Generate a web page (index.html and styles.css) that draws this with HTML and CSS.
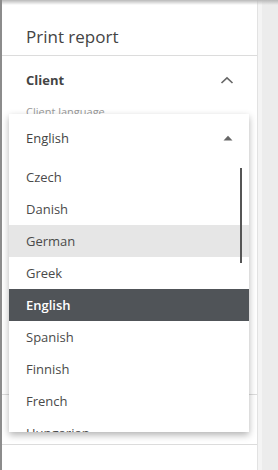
FILE: index.html
```
<!DOCTYPE html>
<html>

<head>
    <title>Print report</title>
    <link rel="stylesheet" href="styles.css">
</head>

<body>
    <div class="page">
        <div class="panel">
            <div class="panel-header">
                <h1>Print report</h1>
            </div>

            <div class="section">
                <div class="section-title">
                    <span>Client</span>
                    <svg class="chevron" width="14" height="8" viewBox="0 0 14 8">
                        <path d="M1.5 7 L7 1.8 L12.5 7" fill="none" stroke="#666" stroke-width="1.6" />
                    </svg>
                </div>
                <div class="field-label">Client language</div>
                <div class="field-spacer"></div>
            </div>

            <div class="section section-short"></div>
            <div class="section section-last"></div>

            <!-- open language dropdown -->
            <div class="dropdown">
                <div class="dropdown-head">
                    <span>English</span>
                    <svg class="caret" width="10" height="6" viewBox="0 0 10 6">
                        <path d="M0.5 5.5 L5 0.8 L9.5 5.5 Z" fill="#666" />
                    </svg>
                </div>
                <ul class="options">
                    <li>Czech</li>
                    <li>Danish</li>
                    <li class="hover">German</li>
                    <li>Greek</li>
                    <li class="selected">English</li>
                    <li>Spanish</li>
                    <li>Finnish</li>
                    <li>French</li>
                    <li>Hungarian</li>
                </ul>
                <div class="scroll-thumb"></div>
            </div>
        </div>
        <div class="side"></div>
    </div>
</body>

</html>
```

FILE: styles.css
```
/* Page frame */
body {
    margin: 0;
    font-family: "Open Sans", "Noto Sans", sans-serif;
    color: #444;
    background-color: #ececec;
}

.page {
    display: flex;
    height: 470px;
    border-left: 2px solid #8c8c8c;
    position: relative;
    overflow: hidden;
}

/* thin shadow along the top edge */
.page::before {
    content: "";
    position: absolute;
    left: 0;
    right: 0;
    top: 0;
    height: 5px;
    background: linear-gradient(#b9b9b9, rgba(200, 200, 200, 0));
    z-index: 5;
}

/* Side panel */
.panel {
    width: 255px;
    background-color: #fff;
    border-right: 1px solid #e2e2e2;
    position: relative;
}

.side {
    flex: 1;
    border-left: 4px solid #f4f4f4;
    background-color: #ececec;
}

.panel-header {
    height: 56px;
    border-bottom: 1px solid #dcdcdc;
    padding-left: 24px;
    box-sizing: border-box;
}

h1 {
    margin: 0;
    padding-top: 25px;
    font-size: 17px;
    font-weight: normal;
    line-height: 24px;
    color: #444;
}

/* Sections */
.section {
    border-bottom: 1px solid #dcdcdc;
    padding: 0 22px 0 24px;
}

.section-title {
    display: flex;
    align-items: center;
    justify-content: space-between;
    height: 48px;
    font-size: 13px;
    font-weight: bold;
}

.chevron {
    margin-right: 1px;
}

.field-label {
    font-size: 11px;
    color: #999;
    line-height: 16px;
}

.field-spacer {
    height: 274px;
}

.section-short {
    height: 49px;
}

.section-last {
    border-bottom: none;
}

/* Dropdown */
.dropdown {
    position: absolute;
    left: 7px;
    top: 114px;
    width: 240px;
    height: 318px;
    background-color: #fff;
    box-shadow: 0 3px 7px rgba(0, 0, 0, 0.3);
    overflow: hidden;
    z-index: 3;
}

.dropdown-head {
    display: flex;
    align-items: center;
    justify-content: space-between;
    height: 47px;
    padding: 0 16px 0 17px;
    font-size: 13px;
}

.options {
    list-style: none;
    margin: 0;
    padding: 0;
}

.options li {
    height: 32px;
    line-height: 32px;
    padding-left: 17px;
    font-size: 13px;
    color: #4a4a4a;
}

.options li.hover {
    background-color: #e6e6e6;
}

.options li.selected {
    background-color: #505458;
    color: #fff;
    font-weight: 600;
}

.scroll-thumb {
    position: absolute;
    left: 231px;
    top: 54px;
    width: 2px;
    height: 95px;
    background-color: #555;
}
```
